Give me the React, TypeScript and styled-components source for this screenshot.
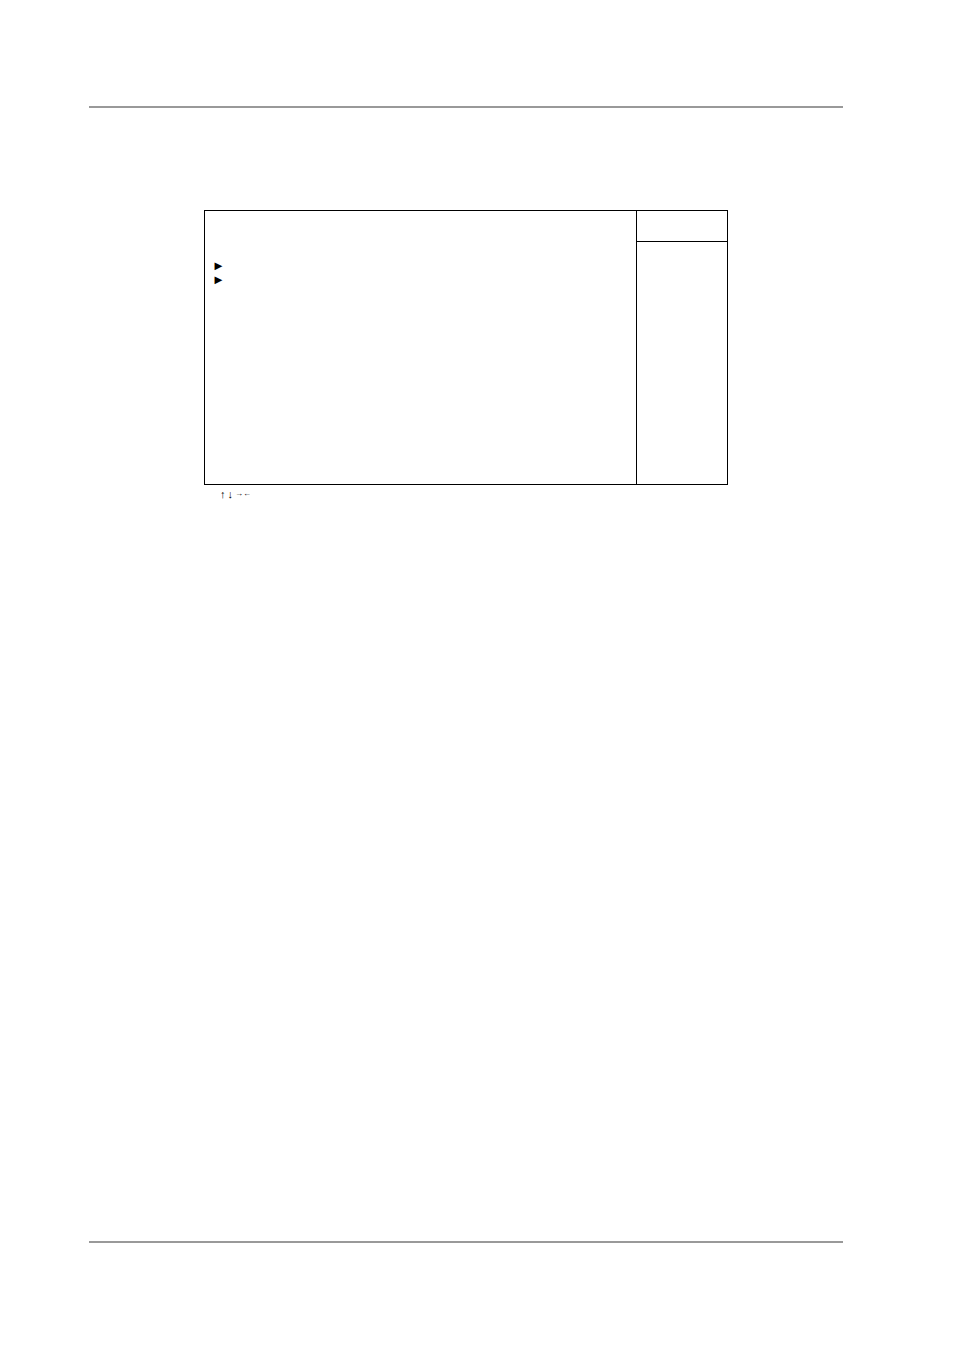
import React from 'react';
import styled, { createGlobalStyle } from 'styled-components';

const GlobalStyle = createGlobalStyle`
  body {
    margin: 0;
    background: #fff;
    color: #000;
  }
`;

const Page = styled.div`
  box-sizing: border-box;
  min-height: 100vh;
  padding: 106px 111px 108px 89px;
  display: flex;
  flex-direction: column;
`;

const Rule = styled.hr`
  width: 100%;
  height: 2px;
  margin: 0;
  border: 0;
  background: #999;
`;

const Content = styled.main`
  flex: 1;
  padding: 102px 115px 0;
`;

const Frame = styled.section`
  display: grid;
  grid-template-columns: 1fr 91px;
  min-height: 273px;
  border: 1px solid #000;
`;

const MenuPane = styled.ul`
  margin: 0;
  padding: 48px 7px 0;
  list-style: none;
`;

const MenuItem = styled.li`
  font: 13px/14px 'Liberation Sans', Arial, sans-serif;
`;

const HelpPane = styled.aside`
  display: flex;
  flex-direction: column;
  border-left: 1px solid #000;
`;

const HelpHeader = styled.div`
  height: 30px;
  border-bottom: 1px solid #000;
`;

const KeyLegend = styled.div`
  display: flex;
  gap: 2px;
  padding: 2px 16px 0;
  font: 11px/14px 'Liberation Serif', 'Times New Roman', serif;
`;

const SideArrows = styled.span`
  font-size: 8px;
`;

export default function App() {
  return (
    <>
      <GlobalStyle />
      <Page>
        <Rule />
        <Content>
          <Frame>
            <MenuPane>
              <MenuItem>►</MenuItem>
              <MenuItem>►</MenuItem>
            </MenuPane>
            <HelpPane>
              <HelpHeader />
            </HelpPane>
          </Frame>
          <KeyLegend>
            <span>↑</span>
            <span>↓</span>
            <SideArrows>→←</SideArrows>
          </KeyLegend>
        </Content>
        <Rule />
      </Page>
    </>
  );
}
